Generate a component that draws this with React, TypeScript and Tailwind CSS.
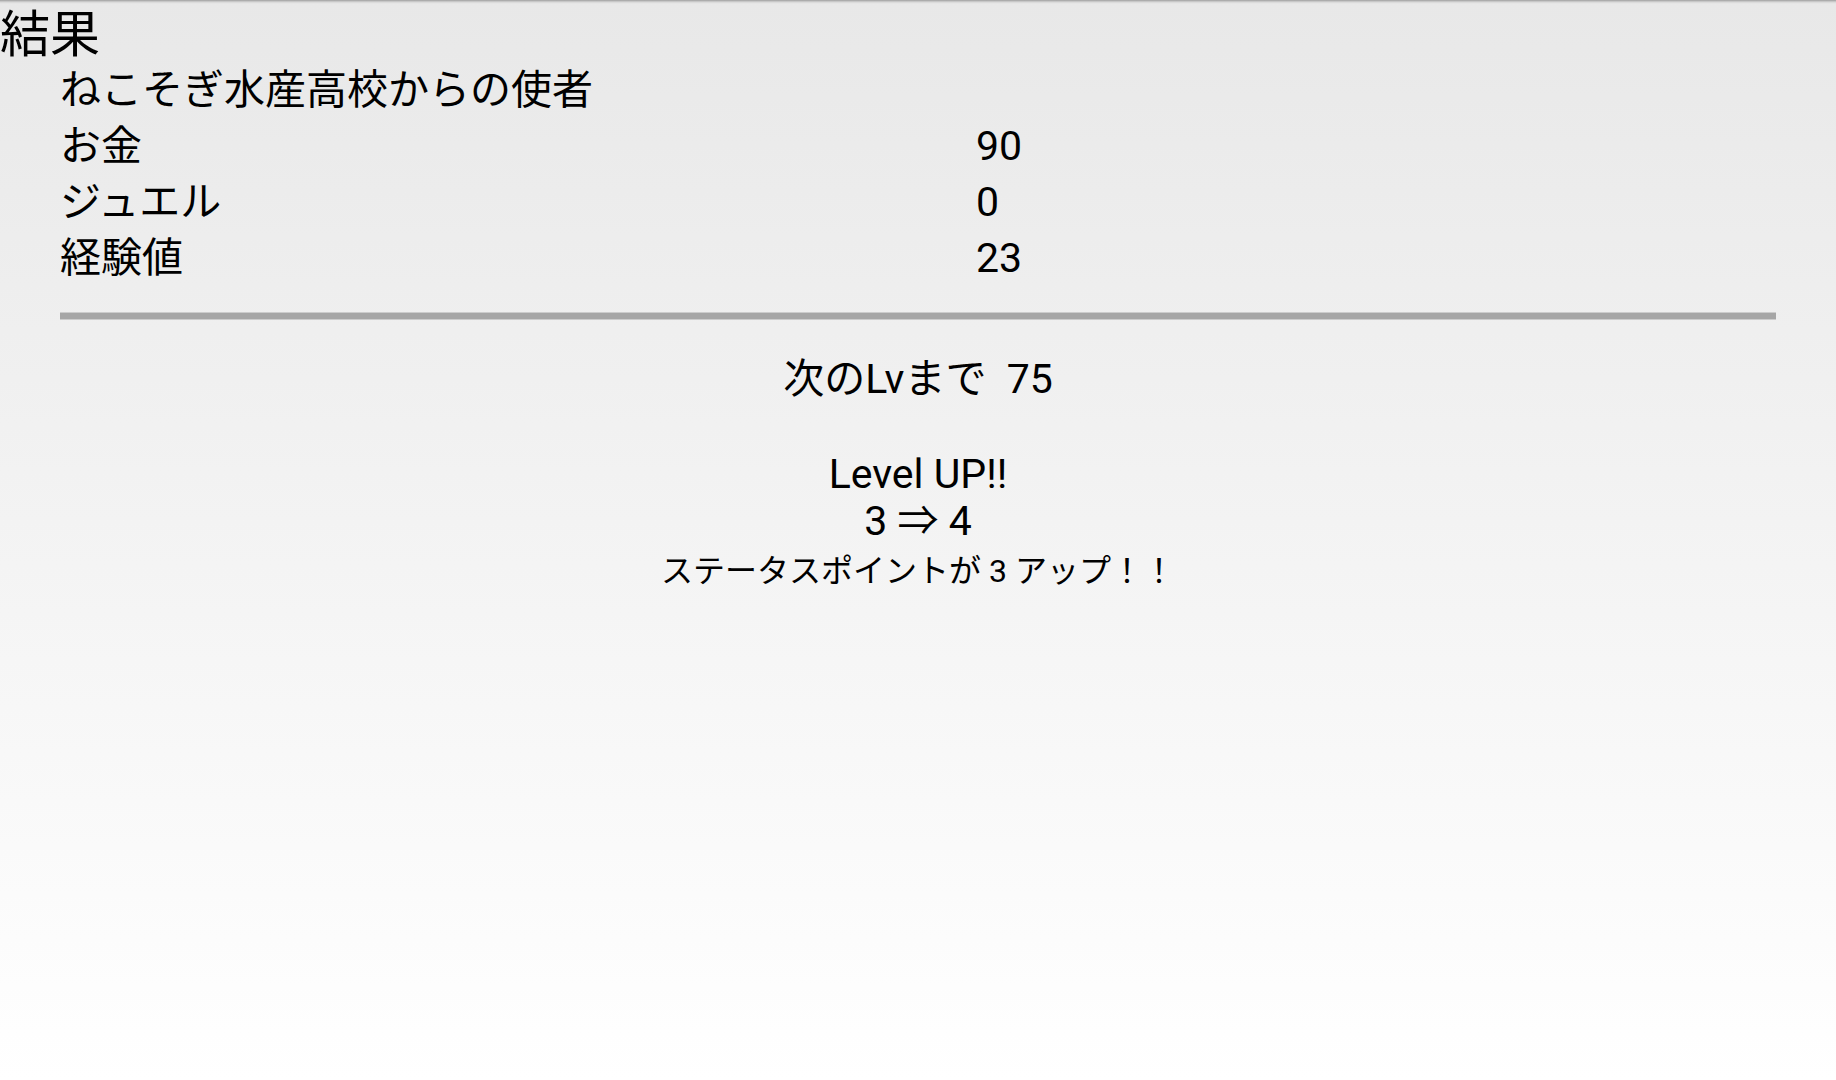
import React from "react";

type Row = { label: string; value?: number };

const rows: Row[] = [
  { label: "ねこそぎ水産高校からの使者" },
  { label: "お金", value: 90 },
  { label: "ジュエル", value: 0 },
  { label: "経験値", value: 23 },
];

export default function App() {
  const nextLv = 75;
  const from = 3;
  const to = 4;
  const points = 3;

  return (
    <div className="min-h-screen w-full bg-gradient-to-b from-[#e8e8e8] to-[#ffffff] shadow-[inset_0_4px_3px_-3px_rgba(0,0,0,0.4)] text-black font-['Roboto','Noto_Sans_CJK_JP',sans-serif]">
      {/* title */}
      <h1 className="pt-[8px] text-[50px] leading-[54px] font-normal">結果</h1>

      {/* rewards */}
      <div className="px-[60px]">
        {rows.map((r) => (
          <div key={r.label} className="grid grid-cols-[916px_1fr] text-[41px] leading-[56px]">
            <span>{r.label}</span>
            <span>{r.value ?? ""}</span>
          </div>
        ))}
      </div>

      <div className="mx-[60px] mt-[26px] h-[8px] bg-[#a6a6a6] border-y border-[#cccccc]" />

      {/* level info */}
      <div className="flex flex-col items-center text-center">
        <p className="mt-[31px] text-[41px] leading-[56px]">次のLvまで&nbsp;&nbsp;{nextLv}</p>
        <p className="mt-[44px] text-[41px] leading-[47px]">Level UP!!</p>
        <p className="text-[41px] leading-[47px]">
          {from} ⇒ {to}
        </p>
        <p className="mt-[1px] text-[32px] leading-[50px]">ステータスポイントが {points} アップ！！</p>
      </div>
    </div>
  );
}
